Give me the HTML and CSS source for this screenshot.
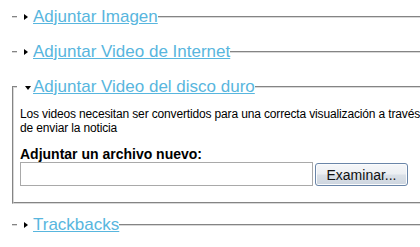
FILE: index.html
```html
<!DOCTYPE html>
<html lang="es">
<head>
<meta charset="utf-8">
<title>Adjuntar</title>
<link rel="stylesheet" href="styles.css">
</head>
<body>
<div class="page">
  <fieldset class="fs collapsed">
    <legend class="lg"><span class="arrow right"></span><a href="#" class="toggle">Adjuntar Imagen</a></legend>
  </fieldset>
  <fieldset class="fs collapsed">
    <legend class="lg"><span class="arrow right"></span><a href="#" class="toggle">Adjuntar Video de Internet</a></legend>
  </fieldset>
  <fieldset class="fs open">
    <legend class="lg"><span class="arrow down"></span><a href="#" class="toggle">Adjuntar Video del disco duro</a></legend>
    <p class="desc">Los videos necesitan ser convertidos para una correcta visualización a través de enviar la noticia</p>
    <label class="label" for="file">Adjuntar un archivo nuevo:</label>
    <div class="file-row">
      <input class="file-input" id="file" type="text">
      <button class="browse" type="button">Examinar...</button>
    </div>
  </fieldset>
  <fieldset class="fs collapsed">
    <legend class="lg"><span class="arrow right"></span><a href="#" class="toggle">Trackbacks</a></legend>
  </fieldset>
</div>
</body>
</html>
```

FILE: styles.css
```css
html, body {
  margin: 0;
  padding: 0;
  overflow: hidden;
  background: #fff;
}
body {
  font-family: "Liberation Sans", Arial, sans-serif;
  color: #000;
}
.page {
  width: 480px;
  padding: 7px 0 0 12px;
}
.fs {
  margin: 0 0 11px;
  padding: 0 6px 16px;
  border: 2px groove #d8d8d8;
  min-width: 0;
}
.collapsed {
  border-left-width: 0;
  border-right-width: 0;
  border-bottom-width: 0;
  padding-bottom: 4px;
}
.lg {
  padding: 0;
  margin-left: -1px;
  font-size: 17px;
  line-height: 20px;
}
.open .lg {
  margin-left: -3px;
}
.arrow {
  display: inline-block;
  width: 0;
  height: 0;
  vertical-align: middle;
}
.arrow.right {
  margin: 0 5px 2px 7px;
  border-top: 3px solid transparent;
  border-bottom: 3px solid transparent;
  border-left: 4px solid #000;
}
.arrow.down {
  margin: 0 2px 0 8px;
  border-left: 3.5px solid transparent;
  border-right: 3.5px solid transparent;
  border-top: 4px solid #000;
}
.toggle {
  color: #58b6de;
  text-decoration: underline;
}
.desc {
  margin: 10px 0 0;
  max-width: 414px;
  font-size: 12px;
  line-height: 14px;
  letter-spacing: -0.15px;
}
.label {
  display: block;
  margin-top: 11px;
  font-size: 14px;
  line-height: 16px;
  font-weight: bold;
}
.file-row {
  display: flex;
  align-items: flex-start;
  gap: 2px;
}
.file-input {
  box-sizing: border-box;
  width: 293px;
  height: 24px;
  margin: 0;
  border: 1px solid #a9a9a9;
  background: #fff;
}
.browse {
  box-sizing: border-box;
  width: 93px;
  height: 23px;
  margin: 1px 0 0;
  padding: 0;
  border: 1px solid #6a85a8;
  border-radius: 3px;
  background: linear-gradient(#f6f7f9 0%, #eceff3 48%, #dbe1e8 52%, #cdd5df 100%);
  box-shadow: inset 0 0 0 1px #fbfcfd;
  font-family: "Liberation Sans", Arial, sans-serif;
  font-size: 14px;
  color: #111;
}
```
